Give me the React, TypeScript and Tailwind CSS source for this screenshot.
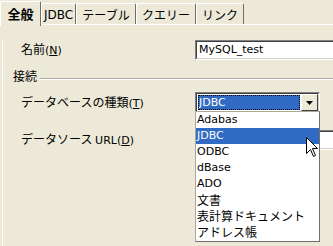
import React from "react";

const jp = "font-['MS_UI_Gothic','Noto_Sans_CJK_JP',sans-serif]";
const lat = "font-['DejaVu_Sans','Noto_Sans_CJK_JP',sans-serif]";

const tabs = [
  { label: "JDBC", w: "w-[35px]", latin: true },
  { label: "テーブル", w: "w-[60px]" },
  { label: "クエリー", w: "w-[60px]" },
  { label: "リンク", w: "w-[48px]" },
];

const items = ["Adabas", "JDBC", "ODBC", "dBase", "ADO", "文書", "表計算ドキュメント", "アドレス帳"];

function Sunken({ children, className = "" }: { children?: React.ReactNode; className?: string }) {
  return (
    <div className={`border-t border-l border-[#808080] border-b border-r border-b-white border-r-white ${className}`}>
      <div className="h-full border-t border-l border-[#404040] border-b border-r border-b-[#d4d0c8] border-r-[#d4d0c8] bg-white">
        {children}
      </div>
    </div>
  );
}

export default function App() {
  return (
    <div className={`relative w-[333px] h-[246px] overflow-hidden bg-[#ECE9D8] text-black ${jp}`}>
      {/* tab strip */}
      <div className="flex items-end h-[25px] relative">
        <div className="w-[41px] h-[25px] border-l border-t border-r border-white border-r-[#716F64] rounded-t-[2px] bg-[#ECE9D8] flex items-center justify-center text-[13px] font-bold relative z-10 -mb-px">
          全般
        </div>
        {tabs.map((t) => (
          <div
            key={t.label}
            className={`${t.w} h-[22px] border-l border-t border-r border-white border-r-[#716F64] rounded-t-[2px] flex items-center justify-center text-[12px] pt-[1px] ${t.latin ? `${lat} text-[11px]` : ""}`}
          >
            {t.label}
          </div>
        ))}
        <div className="absolute left-0 right-0 bottom-0 h-px bg-white" />
      </div>

      {/* panel */}
      <div className="ml-[2px] border-l border-white h-[222px] pl-[10px] text-[12px]">
        <div className="grid grid-cols-[182px_1fr] items-center mt-[15px] h-[20px]">
          <div className="pl-[8px]">
            名前<span className={`${lat} text-[11px]`}>(<u>N</u>)</span>
          </div>
          <Sunken className="h-[20px] w-[200px]">
            <div className={`${lat} text-[11px] leading-[16px] pl-[2px]`}>MySQL_test</div>
          </Sunken>
        </div>

        <div className="flex items-center gap-[3px] mt-[8px] h-[16px]">
          <span>接続</span>
          <div className="flex-1 flex flex-col mt-[6px]">
            <div className="h-px bg-[#ACA899]" />
            <div className="h-px bg-white" />
          </div>
        </div>

        <div className="grid grid-cols-[182px_1fr] items-center mt-[8px] h-[21px]">
          <div className="pl-[8px]">
            データベースの種類<span className={`${lat} text-[11px]`}>(<u>T</u>)</span>
          </div>
          <Sunken className="h-[21px] w-[125px]">
            <div className="flex h-full">
              <div className="flex-1 p-[1px]">
                <div className={`h-full bg-[#316AC5] text-white ${lat} text-[11px] leading-[15px] pl-[1px] outline-1 outline-dotted outline-black -outline-offset-1`}>
                  JDBC
                </div>
              </div>
              <div className="w-[17px] border-t border-l border-white border-b border-r border-b-[#404040] border-r-[#404040] bg-[#ECE9D8] flex items-center justify-center">
                <svg width="7" height="4" viewBox="0 0 7 4"><path d="M0 0h7L3.5 4z" fill="#000" /></svg>
              </div>
            </div>
          </Sunken>
        </div>

        <div className="grid grid-cols-[182px_1fr] items-center mt-[17px] h-[20px]">
          <div className="pl-[8px]">
            データソース <span className={`${lat} text-[11px]`}>URL(<u>D</u>)</span>
          </div>
          <Sunken className="h-[20px] w-[200px]" />
        </div>
      </div>

      {/* dropdown list */}
      <div className="absolute left-[195px] top-[111px] w-[125px] h-[131px] bg-white border border-[#000] border-t-[#ACA899] border-l-[#ACA899] border-r-[#716F64] border-b-[#716F64] z-20">
        {items.map((it, i) => (
          <div
            key={it}
            className={`h-[16px] leading-[16px] pl-[1px] ${/^[A-Za-z]/.test(it) ? `${lat} text-[11px]` : "text-[12px]"} ${i === 1 ? "bg-[#316AC5] text-white" : ""}`}
          >
            {it}
          </div>
        ))}
      </div>

      {/* mouse cursor */}
      <svg className="absolute left-[306px] top-[137px] z-30" width="13" height="21" viewBox="0 0 13 21">
        <path d="M0.5 0.5 L0.5 16.5 L4.5 12.5 L7.5 19.5 L9.5 18.5 L6.5 11.5 L11.5 11.5 Z" fill="#fff" stroke="#000" strokeWidth="1" />
      </svg>
    </div>
  );
}
